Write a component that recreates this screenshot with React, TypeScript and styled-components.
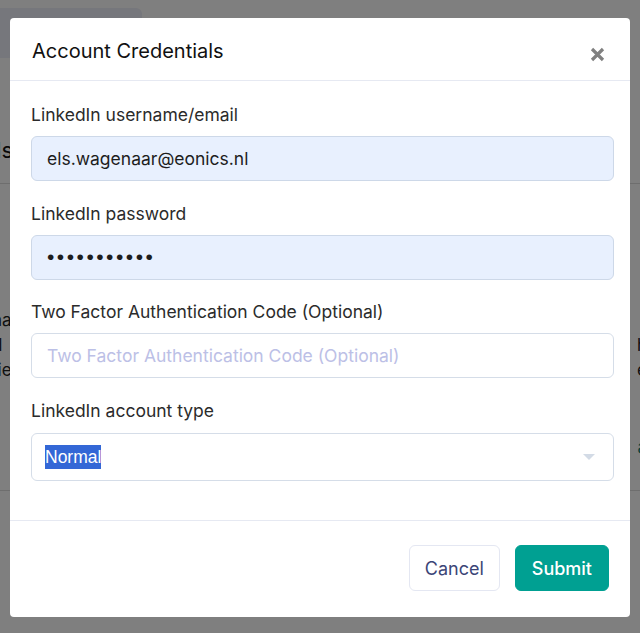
import React from 'react'
import styled, { createGlobalStyle } from 'styled-components'

const GlobalStyle = createGlobalStyle`
  html, body {
    margin: 0;
    padding: 0;
    background: #ffffff;
  }
  body {
    font-family: Inter, "Noto Sans", sans-serif;
  }
  * {
    box-sizing: border-box;
  }
`

const Page = styled.div`
  position: relative;
  width: 640px;
  height: 633px;
  overflow: hidden;
  background: #ffffff;
  display: flex;
  flex-direction: column;
`

const TopTab = styled.div`
  width: 142px;
  height: 50px;
  margin-top: 8px;
  background: #eceef8;
  border-radius: 0 6px 0 0;
  flex-shrink: 0;
`

const SideTitle = styled.div`
  margin-top: 79px;
  margin-left: -12px;
  font-size: 22px;
  line-height: 26px;
  color: #111;
`

const Rule = styled.div<{ $top: number }>`
  margin-top: ${(p) => p.$top}px;
  height: 1px;
  flex-shrink: 0;
  background: #dddddd;
`

const SideRow = styled.div`
  margin-top: 124px;
  display: flex;
  justify-content: space-between;
  font-size: 17px;
  line-height: 25px;
  color: #222;
`

const LeftBits = styled.div`
  margin-left: -8px;
`

const RightBits = styled.div`
  margin-right: -7px;
  text-align: right;
`

const Teal = styled.div`
  margin-top: 52px;
  color: #0a7f74;
`

const FooterText = styled.div`
  margin-left: 154px;
  margin-top: 96px;
  font-family: "Liberation Sans", Arial, sans-serif;
  font-size: 20px;
  color: #111;
`

const Overlay = styled.div`
  position: absolute;
  inset: 0;
  background: rgba(0, 0, 0, 0.5);
`

const Modal = styled.div`
  position: absolute;
  top: 18px;
  left: 10px;
  width: 620px;
  height: 599px;
  background: #ffffff;
  border-radius: 4px;
  display: flex;
  flex-direction: column;
`

const Header = styled.div`
  height: 63px;
  flex-shrink: 0;
  display: flex;
  align-items: center;
  justify-content: space-between;
  padding: 0 25px 0 22px;
  border-bottom: 1px solid #e6e9f2;
`

const Title = styled.h2`
  margin: 4px 0 0 0;
  font-size: 20px;
  font-weight: 400;
  color: #111;
`

const Close = styled.button`
  border: none;
  background: none;
  padding: 0;
  margin-top: 10px;
  display: flex;
  cursor: pointer;
`

const Body = styled.div`
  flex: 1;
  padding: 21px 16px 20px 21px;
  display: flex;
  flex-direction: column;
  gap: 19.5px;
`

const Group = styled.div`
  display: flex;
  flex-direction: column;
`

const Label = styled.label`
  font-size: 17.5px;
  line-height: 25px;
  color: #2b2b2b;
  margin-bottom: 9px;
`

const Input = styled.input<{ $filled?: boolean }>`
  height: 45px;
  width: 100%;
  padding: 0 15px;
  border: 1px solid ${(p) => (p.$filled ? '#cdd8e8' : '#d5dde8')};
  border-radius: 6px;
  background: ${(p) => (p.$filled ? '#e8f0fe' : '#ffffff')};
  font-family: Inter, "Noto Sans", sans-serif;
  font-size: 17.5px;
  color: #1d1d1d;
  outline: none;

  &::placeholder {
    color: #bcc0e6;
  }
`

const Password = styled(Input)`
  font-family: "Liberation Sans", Arial, sans-serif;
  font-size: 21px;
  letter-spacing: 2.5px;
`

const Select = styled.div`
  height: 48px;
  margin-top: 1px;
  display: flex;
  align-items: center;
  justify-content: space-between;
  padding: 0 18px 0 13px;
  border: 1px solid #d5dde8;
  border-radius: 6px;
`

const Selected = styled.span`
  font-family: "Liberation Sans", Arial, sans-serif;
  font-size: 17.5px;
  line-height: 24px;
  background: #3367d6;
  color: #ffffff;
`

const Caret = styled.span`
  width: 0;
  height: 0;
  border-left: 6px solid transparent;
  border-right: 6px solid transparent;
  border-top: 6px solid #d3dbe6;
`

const Footer = styled.div`
  height: 97px;
  flex-shrink: 0;
  display: flex;
  align-items: center;
  justify-content: flex-end;
  gap: 15px;
  padding: 0 21px;
  border-top: 1px solid #e6e9f2;
`

const Button = styled.button<{ $primary?: boolean }>`
  height: 46px;
  margin-bottom: 2px;
  padding: 0 ${(p) => (p.$primary ? '16px' : '15px')};
  border-radius: 6px;
  border: 1px solid ${(p) => (p.$primary ? '#00a092' : '#e4e7f2')};
  background: ${(p) => (p.$primary ? '#00a092' : '#ffffff')};
  color: ${(p) => (p.$primary ? '#ffffff' : '#3b4577')};
  font-family: Inter, "Noto Sans", sans-serif;
  font-size: 18px;
  font-weight: ${(p) => (p.$primary ? 500 : 400)};
  cursor: pointer;
`

export default function App() {
  return (
    <>
      <GlobalStyle />
      <Page>
        <TopTab />
        <SideTitle>ds</SideTitle>
        <Rule $top={20} />
        <SideRow>
          <LeftBits>
            na
            <br />
            d
            <br />
            tie
          </LeftBits>
          <RightBits>
            ,
            <br />
            h
            <br />
            e
            <Teal>a</Teal>
          </RightBits>
        </SideRow>
        <Rule $top={30} />
        <FooterText>Jobbird</FooterText>
        <Overlay />
        <Modal>
          <Header>
            <Title>Account Credentials</Title>
            <Close aria-label="Close">
              <svg width="15" height="15" viewBox="0 0 15 15">
                <path
                  d="M2 2 L13 13 M13 2 L2 13"
                  stroke="#808080"
                  strokeWidth="3.2"
                  strokeLinecap="butt"
                />
              </svg>
            </Close>
          </Header>
          <Body>
            <Group>
              <Label>LinkedIn username/email</Label>
              <Input $filled readOnly value="els.wagenaar@eonics.nl" />
            </Group>
            <Group>
              <Label>LinkedIn password</Label>
              <Password $filled type="password" readOnly value="secretpass1" />
            </Group>
            <Group>
              <Label>Two Factor Authentication Code (Optional)</Label>
              <Input placeholder="Two Factor Authentication Code (Optional)" />
            </Group>
            <Group>
              <Label>LinkedIn account type</Label>
              <Select>
                <Selected>Normal</Selected>
                <Caret />
              </Select>
            </Group>
          </Body>
          <Footer>
            <Button>Cancel</Button>
            <Button $primary>Submit</Button>
          </Footer>
        </Modal>
      </Page>
    </>
  )
}
